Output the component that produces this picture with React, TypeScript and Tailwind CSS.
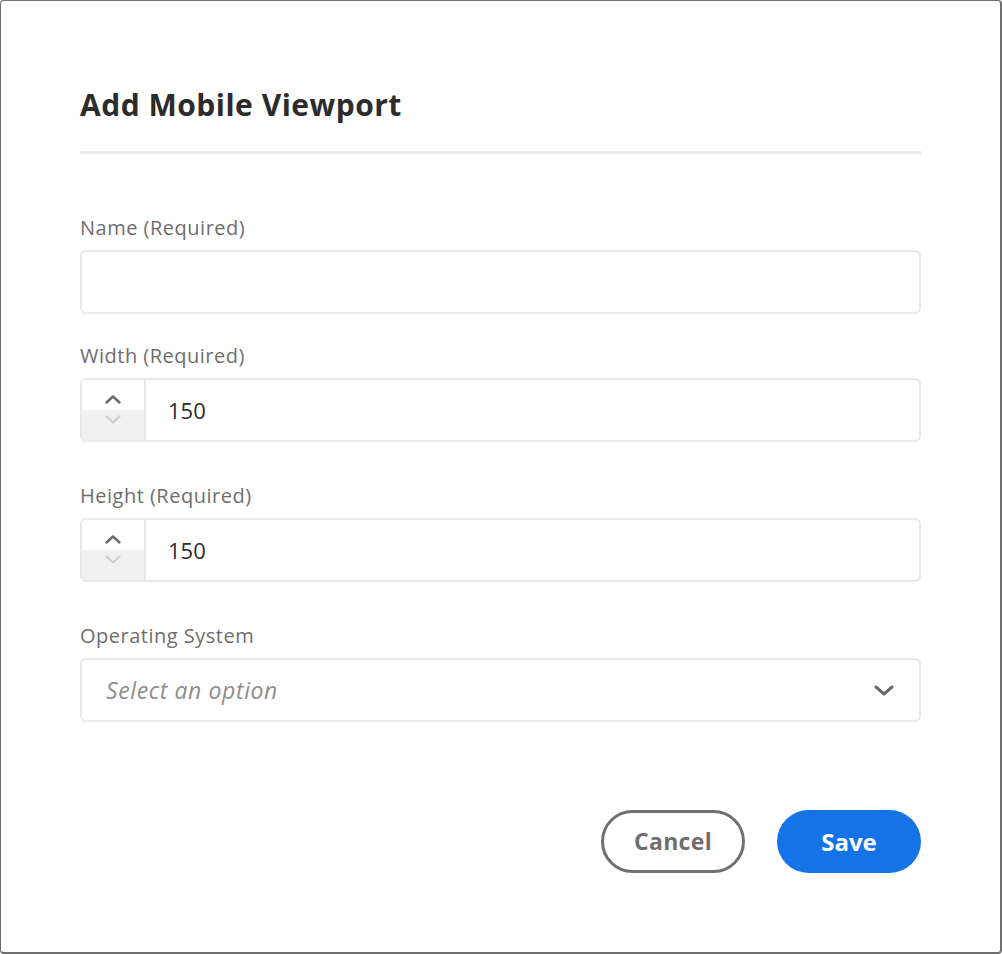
import React from "react";

const font = { fontFamily: "'Open Sans', 'Noto Sans', sans-serif" };

function Stepper({ value }: { value: string }) {
  return (
    <div className="flex h-[64px] rounded-[6px] border-2 border-[#e9e9e9] overflow-hidden">
      <div className="flex w-[64px] flex-col border-r-2 border-[#e9e9e9]">
        <div className="flex h-[30px] items-end justify-center bg-white pb-[5px]">
          <svg width="18" height="11" viewBox="0 0 18 11" fill="none">
            <path d="M2.5 8.5 L9 2.5 L15.5 8.5" stroke="#6b6b6b" strokeWidth="2.4" strokeLinecap="round" strokeLinejoin="round" />
          </svg>
        </div>
        <div className="flex flex-1 items-start justify-center bg-[#f1f1f1] pt-[4px]">
          <svg width="18" height="11" viewBox="0 0 18 11" fill="none">
            <path d="M2.5 2.5 L9 8.5 L15.5 2.5" stroke="#cdcdcd" strokeWidth="2.2" strokeLinecap="round" strokeLinejoin="round" />
          </svg>
        </div>
      </div>
      <div className="flex flex-1 items-center pl-[22px] text-[22px] text-[#2c2c2c]">{value}</div>
    </div>
  );
}

function Label({ children }: { children: React.ReactNode }) {
  return <div className="mb-[10px] text-[20px] leading-[24px] tracking-[0.5px] text-[#6e6e6e]">{children}</div>;
}

export default function App() {
  return (
    <div style={font} className="h-[954px] w-[1002px] bg-white">
      <div className="h-full w-full rounded-[4px] border-t border-l border-r-2 border-b-2 border-[#6f6f6f] bg-white px-[79px] pt-[84px]">
        <h1 className="text-[30px] font-bold leading-[40px] tracking-[0.5px] text-[#2c2c2c]">Add Mobile Viewport</h1>
        <div className="mt-[26px] h-[3px] w-full bg-[#e9e9e9]" />
        <div className="mt-[62px]">
          <Label>Name (Required)</Label>
          <div className="h-[64px] rounded-[6px] border-2 border-[#e9e9e9]" />
        </div>
        <div className="mt-[30px]">
          <Label>Width (Required)</Label>
          <Stepper value="150" />
        </div>
        <div className="mt-[42px]">
          <Label>Height (Required)</Label>
          <Stepper value="150" />
        </div>
        <div className="mt-[42px]">
          <Label>Operating System</Label>
          <div className="flex h-[64px] items-center justify-between rounded-[6px] border-2 border-[#e9e9e9] pl-[24px] pr-[24px]">
            <span className="text-[23px] italic tracking-[0.6px] text-[#8e8e8e]">Select an option</span>
            <svg width="22" height="13" viewBox="0 0 22 13" fill="none">
              <path d="M3 3 L11 10 L19 3" stroke="#6b6b6b" strokeWidth="3" strokeLinecap="round" strokeLinejoin="round" />
            </svg>
          </div>
        </div>
        <div className="mt-[88px] flex justify-end gap-[32px]">
          <button className="h-[63px] w-[144px] rounded-full border-[3px] border-[#707070] text-[23px] font-bold tracking-[0.3px] text-[#6e6e6e]">Cancel</button>
          <button className="h-[63px] w-[144px] rounded-full bg-[#1473e6] text-[24px] font-bold text-white">Save</button>
        </div>
      </div>
    </div>
  );
}
